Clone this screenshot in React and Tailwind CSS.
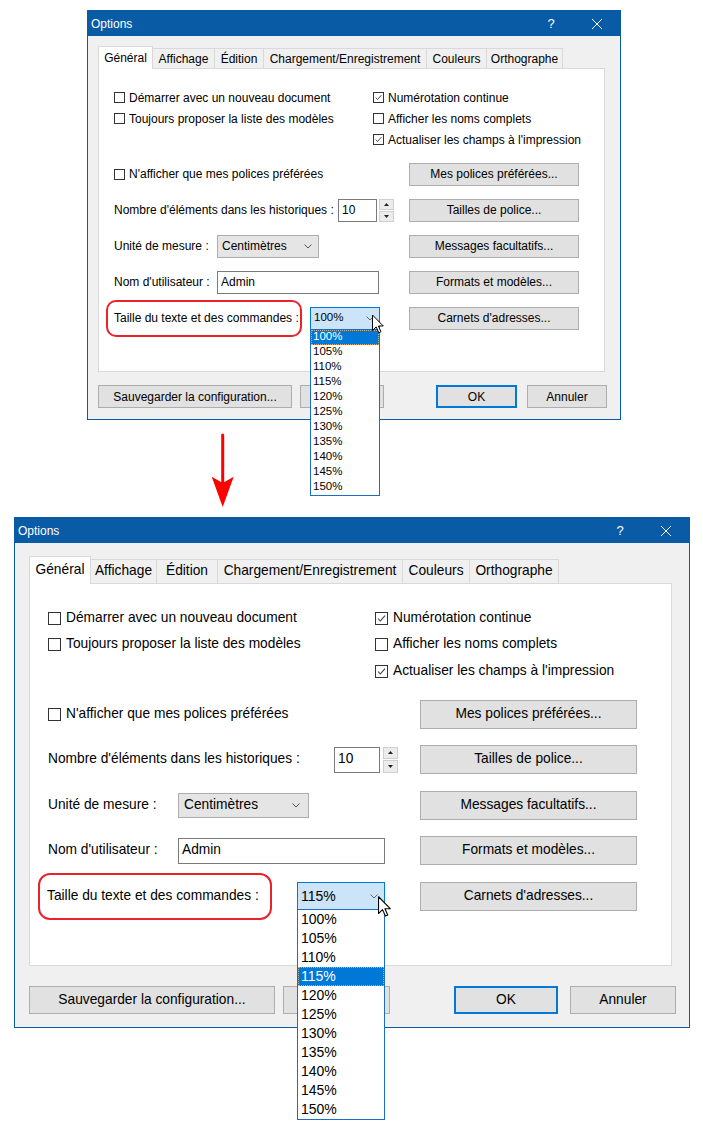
import React from 'react';

const PCTS = ['100%', '105%', '110%', '115%', '120%', '125%', '130%', '135%', '140%', '145%', '150%'];
const TABS = ['Général', 'Affichage', 'Édition', 'Chargement/Enregistrement', 'Couleurs', 'Orthographe'];

// class sets for the 100% dialog and the 115% one
const SMALL = {
  wrap: 'ml-[87px] mt-[10px] w-[534px] h-[410px]',
  body: 'pt-[10px] pl-[10px] pr-[15px] text-[12px]',
  tabRow: 'h-[22px]',
  tabOn: 'h-[23px]',
  tabOff: 'h-[20px]',
  tabW: ['w-[55px]', 'w-[62px]', 'w-[49px]', 'w-[163px]', 'w-[60px]', 'w-[76px]'],
  panel: 'h-[304px] pt-[18px] pl-[15px]',
  col1: 'w-[259px]',
  checkRow: 'h-[21px]',
  box: 'w-[11px] h-[11px]',
  boxGap: 'gap-[4px]',
  lower: 'mt-[6px]',
  row: 'h-[36px]',
  left: 'w-[295px]',
  rbtn: 'w-[170px] h-[23px]',
  nbLabel: 'w-[224px]',
  nbInput: 'w-[39px] h-[23px] pl-[3px]',
  spin: 'ml-[2px] w-[15px] h-[23px]',
  lbl: 'w-[103px]',
  unit: 'w-[102px] h-[23px] pl-[4px] pr-[6px]',
  name: 'w-[162px] h-[23px] pl-[3px]',
  ring: '-ml-[8px] w-[196px] h-[37px] rounded-[10px] pl-[6px]',
  combo: 'ml-[8px] w-[70px] h-[23px] pl-[3px] pr-[5px] text-[11.5px]',
  item: 'h-[15px] pl-[2px] text-[11.5px]',
  cursor: 'left-[61px] top-[6px] w-[12px] h-[20px]',
  foot: 'mt-[13px] -mr-[2px]',
  fbtn: 'h-[23px]',
  save: 'w-[194px]',
  hidden: 'ml-[8px] w-[84px]',
  okGap: 'gap-[10px]',
  ok: 'w-[81px]',
  cancel: 'w-[80px]',
  pb: 'pb-[11px]',
};

const LARGE = {
  wrap: 'ml-[14px] w-[676px] h-[511px]',
  body: 'pt-[13px] pl-[14px] pr-[17px] text-[13.75px]',
  tabRow: 'h-[27px]',
  tabOn: 'h-[28px]',
  tabOff: 'h-[24px]',
  tabW: ['w-[62px]', 'w-[66px]', 'w-[61px]', 'w-[185px]', 'w-[67px]', 'w-[89px]'],
  panel: 'h-[383px] pt-[21px] pl-[18px]',
  col1: 'w-[327px]',
  checkRow: 'h-[26.5px]',
  box: 'w-[13px] h-[13px]',
  boxGap: 'gap-[5px]',
  lower: 'mt-[6.75px]',
  row: 'h-[45.5px]',
  left: 'w-[372px]',
  rbtn: 'w-[217px] h-[29px]',
  nbLabel: 'w-[286px]',
  nbInput: 'w-[46px] h-[26px] pl-[3px]',
  spin: 'ml-[3px] w-[15px] h-[26px]',
  lbl: 'w-[130px]',
  unit: 'w-[131px] h-[25px] pl-[5px] pr-[8px]',
  name: 'w-[207px] h-[26px] pl-[3px]',
  ring: '-ml-[10px] w-[234px] h-[47px] rounded-[12px] pl-[7px]',
  combo: 'ml-[25px] w-[88px] h-[28px] pl-[3px] pr-[6px] text-[14px]',
  item: 'h-[19px] pl-[3px] text-[14px]',
  cursor: 'left-[80px] top-[13px] w-[13px] h-[21px]',
  foot: 'mt-[20px] -mr-[4px]',
  fbtn: 'h-[28px]',
  save: 'w-[246px]',
  hidden: 'ml-[8px] w-[107px]',
  okGap: 'gap-[12px]',
  ok: 'w-[104px]',
  cancel: 'w-[106px]',
  pb: 'pb-[13px]',
};

function Check({ c, checked, label }) {
  return (
    <div className={`flex items-center ${c.boxGap}`}>
      <span className={`${c.box} shrink-0 border border-[#333] bg-white flex items-center justify-center`}>
        {checked && (
          <svg viewBox="0 0 11 11" className="w-full h-full">
            <polyline points="2,5.5 4.3,8 9,2.6" fill="none" stroke="#3c3c3c" strokeWidth="1.1" />
          </svg>
        )}
      </span>
      <span className="whitespace-nowrap">{label}</span>
    </div>
  );
}

function Chevron({ color = '#555' }) {
  return (
    <svg width="8" height="5" viewBox="0 0 8 5" className="shrink-0">
      <polyline points="0.5,0.5 4,4 7.5,0.5" fill="none" stroke={color} strokeWidth="1" />
    </svg>
  );
}

function Btn({ className, children }) {
  return (
    <div className={`${className} shrink-0 border border-[#adadad] bg-[#e1e1e1] flex items-center justify-center whitespace-nowrap`}>
      {children}
    </div>
  );
}

function Spinner({ c }) {
  return (
    <div className={`${c.spin} flex flex-col gap-px`}>
      <div className="flex-1 border border-[#cfcfcf] bg-[#ececec] flex items-center justify-center">
        <svg width="5" height="3" viewBox="0 0 5 3"><polygon points="0,3 5,3 2.5,0" fill="#222" /></svg>
      </div>
      <div className="flex-1 border border-[#cfcfcf] bg-[#ececec] flex items-center justify-center">
        <svg width="5" height="3" viewBox="0 0 5 3"><polygon points="0,0 5,0 2.5,3" fill="#222" /></svg>
      </div>
    </div>
  );
}

function Cursor({ className }) {
  return (
    <svg viewBox="0 0 12 19" className={`absolute ${className} z-30`}>
      <path d="M0.5 0.5 L0.5 16 L4.2 12.4 L6.8 18.3 L9 17.3 L6.4 11.5 L11.3 11.5 Z" fill="#fff" stroke="#000" strokeWidth="1" strokeLinejoin="round" />
    </svg>
  );
}

function Dialog({ c, value }) {
  const rows = [
    {
      left: <Check c={c} label="N'afficher que mes polices préférées" />,
      btn: 'Mes polices préférées...',
    },
    {
      left: (
        <>
          <span className={`${c.nbLabel} whitespace-nowrap`}>Nombre d'éléments dans les historiques :</span>
          <div className={`${c.nbInput} border border-[#7a7a7a] bg-white flex items-center`}>10</div>
          <Spinner c={c} />
        </>
      ),
      btn: 'Tailles de police...',
    },
    {
      left: (
        <>
          <span className={`${c.lbl} whitespace-nowrap`}>Unité de mesure :</span>
          <div className={`${c.unit} border border-[#adadad] bg-[#e5e5e5] flex items-center justify-between`}>
            <span>Centimètres</span>
            <Chevron />
          </div>
        </>
      ),
      btn: 'Messages facultatifs...',
    },
    {
      left: (
        <>
          <span className={`${c.lbl} whitespace-nowrap`}>Nom d'utilisateur :</span>
          <div className={`${c.name} border border-[#7a7a7a] bg-white flex items-center`}>Admin</div>
        </>
      ),
      btn: 'Formats et modèles...',
    },
    {
      left: (
        <>
          <div className={`${c.ring} shrink-0 border-2 border-[#e8232b] flex items-center whitespace-nowrap`}>
            Taille du texte et des commandes :
          </div>
          <div className={`${c.combo} relative z-20 border border-[#0078d7] bg-[#cce4f7] flex items-center justify-between`}>
            <span>{value}</span>
            <Chevron color="#666" />
            <Cursor className={c.cursor} />
            <div className="absolute left-[-1px] right-[-1px] top-full border border-[#1a6fc4] bg-white">
              {PCTS.map(p => (
                <div
                  key={p}
                  className={`${c.item} flex items-center ${
                    p === value
                      ? 'bg-[#0078d7] text-white outline outline-1 outline-dotted outline-[#f0a848] -outline-offset-1'
                      : 'text-black'
                  }`}
                >
                  {p}
                </div>
              ))}
            </div>
          </div>
        </>
      ),
      btn: "Carnets d'adresses...",
    },
  ];

  return (
    <div className={`${c.wrap} flex flex-col border border-[#0a5ba6] bg-[#f0f0f0] text-black`}>
      <div className="h-[25px] shrink-0 bg-[#0a5ba6] flex items-center justify-between text-white text-[12px]">
        <span className="pl-[3px]">Options</span>
        <div className="flex items-center">
          <span className="w-[46px] text-center text-[13px]">?</span>
          <span className="w-[46px] flex justify-center">
            <svg width="10" height="10" viewBox="0 0 10 10">
              <path d="M0 0 L10 10 M10 0 L0 10" stroke="#fff" strokeWidth="1" />
            </svg>
          </span>
        </div>
      </div>

      <div className={`${c.body} ${c.pb} flex-1 flex flex-col`}>
        <div className={`${c.tabRow} flex items-end`}>
          {TABS.map((t, i) => (
            <div
              key={t}
              className={`${c.tabW[i]} shrink-0 flex items-center justify-center whitespace-nowrap border-t border-r border-[#d9d9d9] ${
                i === 0 ? `${c.tabOn} -mb-px relative z-10 border-l bg-white` : `${c.tabOff} bg-[#f0f0f0]`
              }`}
            >
              {t}
            </div>
          ))}
        </div>

        <div className={`${c.panel} shrink-0 border border-[#d9d9d9] bg-white`}>
          <div className="flex flex-col">
            <div className={`${c.checkRow} flex items-center`}>
              <div className={c.col1}><Check c={c} label="Démarrer avec un nouveau document" /></div>
              <Check c={c} checked label="Numérotation continue" />
            </div>
            <div className={`${c.checkRow} flex items-center`}>
              <div className={c.col1}><Check c={c} label="Toujours proposer la liste des modèles" /></div>
              <Check c={c} label="Afficher les noms complets" />
            </div>
            <div className={`${c.checkRow} flex items-center`}>
              <div className={c.col1} />
              <Check c={c} checked label="Actualiser les champs à l'impression" />
            </div>
          </div>

          <div className={`${c.lower} flex flex-col`}>
            {rows.map(r => (
              <div key={r.btn} className={`${c.row} flex items-center`}>
                <div className={`${c.left} shrink-0 flex items-center`}>{r.left}</div>
                <Btn className={c.rbtn}>{r.btn}</Btn>
              </div>
            ))}
          </div>
        </div>

        <div className={`${c.foot} flex items-center`}>
          <Btn className={`${c.save} ${c.fbtn}`}>Sauvegarder la configuration...</Btn>
          <Btn className={`${c.hidden} ${c.fbtn}`} />
          <div className={`ml-auto flex ${c.okGap}`}>
            <div className={`${c.ok} ${c.fbtn} border-2 border-[#0078d7] bg-[#e1e1e1] flex items-center justify-center`}>OK</div>
            <Btn className={`${c.cancel} ${c.fbtn}`}>Annuler</Btn>
          </div>
        </div>
      </div>
    </div>
  );
}

export default function App() {
  return (
    <div className="w-[703px] h-[1127px] bg-white overflow-hidden font-[family-name:'Liberation_Sans',Arial,sans-serif]">
      <Dialog c={SMALL} value="100%" />
      <div className="h-[97px] pl-[208px]">
        <svg width="30" height="97" viewBox="0 0 30 97">
          <line x1="14.7" y1="15" x2="14.7" y2="64" stroke="#ff0000" strokeWidth="3" strokeLinecap="round" />
          <polygon points="3.7,56.7 14.7,63 25.7,56.7 14.7,87" fill="#ff0000" />
        </svg>
      </div>
      <Dialog c={LARGE} value="115%" />
    </div>
  );
}
